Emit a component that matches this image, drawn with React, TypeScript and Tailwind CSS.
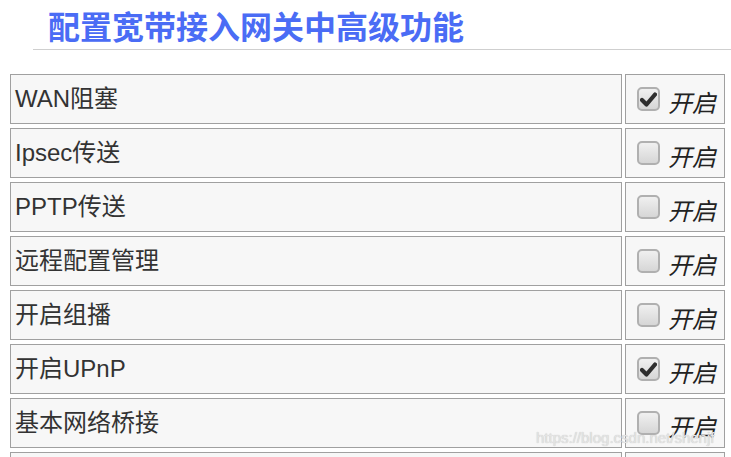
import React from "react";

type Item = {
  name: string;
  on: boolean;
};

const items: Item[] = [
  { name: "WAN阻塞", on: true },
  { name: "Ipsec传送", on: false },
  { name: "PPTP传送", on: false },
  { name: "远程配置管理", on: false },
  { name: "开启组播", on: false },
  { name: "开启UPnP", on: true },
  { name: "基本网络桥接", on: false },
  { name: "", on: false },
];

function Check({ on }: { on: boolean }) {
  return (
    <span className="w-[23px] h-[24px] rounded-[5px] border-2 border-[#b0b0b0] bg-gradient-to-b from-[#f0f0f0] to-[#d6d6d6] flex items-center justify-center shrink-0">
      {on && (
        <svg width="17" height="15" viewBox="0 0 17 15">
          <path d="M2 8 L6.5 12.5 L15 2.5" fill="none" stroke="#2e2e2e" strokeWidth="4.2" strokeLinecap="round" strokeLinejoin="round" />
        </svg>
      )}
    </span>
  );
}

export default function App() {
  return (
    <div className="relative w-[731px] h-[457px] overflow-hidden bg-white text-[#333] font-['Liberation_Sans','Noto_Sans_CJK_SC',sans-serif]">
      {/* Header */}
      <div className="ml-[33px] pt-[8px]">
        <h2 className="pl-[15px] border-b border-[#cfcfcf] text-[32px] leading-[41px] font-bold text-[#4a6cf5]">
          配置宽带接入网关中高级功能
        </h2>
      </div>

      {/* Feature table */}
      <div className="ml-[10px] mt-[24px] grid grid-cols-[612px_100px] gap-x-[3px] gap-y-[4px]">
        {items.map((item, i) => (
          <React.Fragment key={i}>
            <div className="h-[50px] border border-[#a0a0a0] bg-[#f7f7f7] pl-[4px] flex items-center text-[24px] pb-[1px]">
              {item.name}
            </div>
            <div className="h-[50px] border border-[#a0a0a0] bg-[#f7f7f7] pl-[11px] flex items-center gap-[8px]">
              {item.name !== "" && (
                <>
                  <Check on={item.on} />
                  <span className="italic text-[24px] mt-[9px] text-[#222]">开启</span>
                </>
              )}
            </div>
          </React.Fragment>
        ))}
      </div>

      {/* watermark */}
      <div className="absolute left-[536px] top-[427px] text-[15px] text-[#e4e4e4] [text-shadow:0_0_1px_#bbb]">
        https://blog.csdn.net/shenjf
      </div>
    </div>
  );
}
